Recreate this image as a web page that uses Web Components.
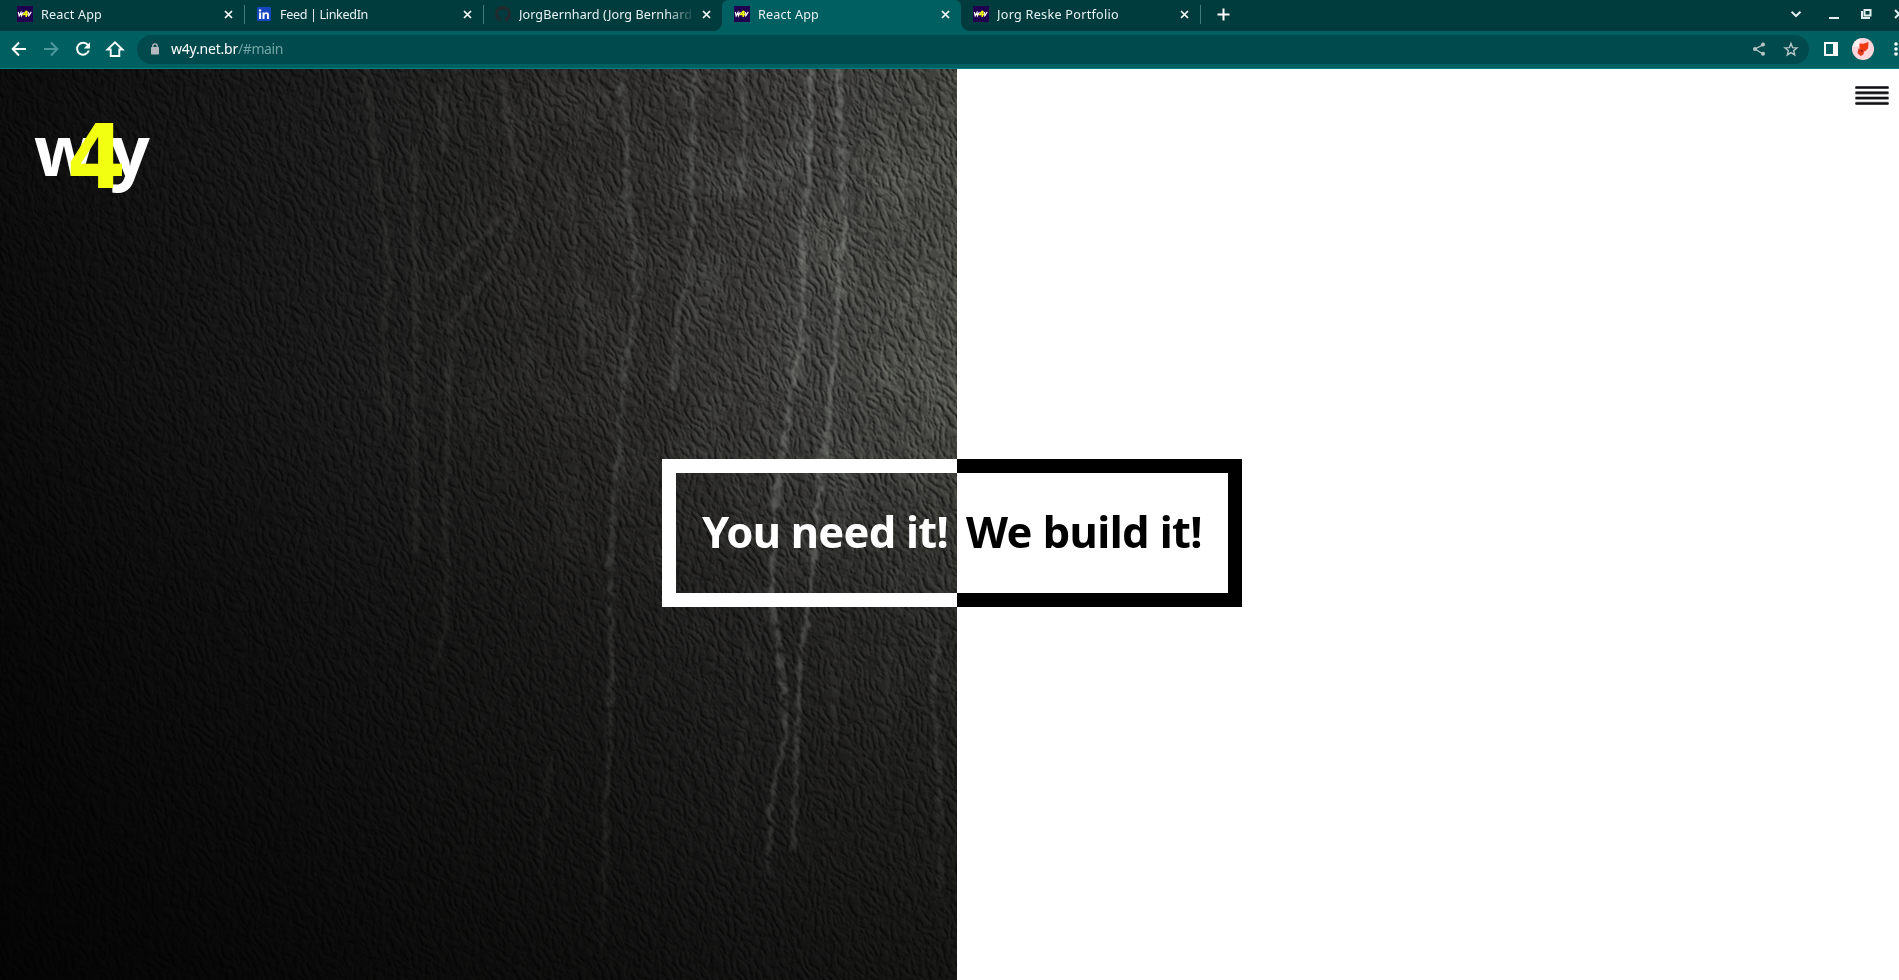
<!DOCTYPE html>
<html lang="en"><head><meta charset="utf-8"><title>w4y</title>
<style>html,body{margin:0;height:100%;overflow:hidden}body{font-family:"Noto Sans","Open Sans",sans-serif}</style></head>
<body><browser-window></browser-window>
<script>
const def=(name,html,init)=>customElements.define(name,class extends HTMLElement{
  connectedCallback(){ if(this.shadowRoot)return; const r=this.attachShadow({mode:'open'});
    r.innerHTML=typeof html==='function'?html(this):html; if(init)init(this,r);}
});

/* Text whose tracking is adjusted so that it spans a given width. */
def('fit-text','<style>:host{display:inline-block;white-space:nowrap}span{display:inline-block}</style><span><slot></slot></span>',(el,r)=>{
  const s=r.querySelector('span'),w=+el.getAttribute('w'),n=el.textContent.length;
  s.style.letterSpacing=((w-s.getBoundingClientRect().width)/n)+'px';
});

const icons={
 w4y:'<svg width="16" height="16"><rect width="16" height="16" fill="#1f0050"/><path d="M1.300 6l.9 3.800L4 6.500l.4 3.300L6.300 6" fill="none" stroke="#fff" stroke-width="1.200"/><path d="M11.300 6l.7 3M14.300 5.800L12 9.500l-1 .8" fill="none" stroke="#fff" stroke-width="1.200"/><path d="M9.600 4.800L6.600 8.500h4.600M10 4.800L9.200 11" fill="none" stroke="#f3ff10" stroke-width="1.500"/></svg>',
 linkedin:'<svg width="16" height="16"><rect x="1" y="1" width="14" height="14" rx=".6" fill="#1447c0"/><circle cx="4.1" cy="4.4" r="1.2" fill="#fff"/><path d="M3.1 6.4h2V13h-2zM6.5 6.4h1.9v.9c.4-.7 1.100-1 2-1 1.900 0 2.500 1.200 2.500 3V13H11V9.700c0-1-.2-1.700-1.100-1.700-1 0-1.400.7-1.400 1.700V13h-2z" fill="#fff"/></svg>',
 github:'<svg width="16" height="16" viewBox="0 0 16 16"><path fill="#24292f" d="M8 0C3.580 0 0 3.580 0 8c0 3.540 2.290 6.530 5.470 7.590.4.07.55-.17.55-.38 0-.19-.01-.82-.01-1.490-2.010.37-2.530-.49-2.690-.94-.09-.23-.48-.94-.82-1.130-.28-.15-.68-.52-.01-.53.63-.01 1.080.58 1.230.82.72 1.210 1.870.87 2.330.66.07-.52.28-.87.51-1.070-1.780-.2-3.640-.89-3.640-3.950 0-.87.31-1.590.82-2.150-.08-.2-.36-1.020.08-2.120 0 0 .67-.21 2.200.82a7.600 7.600 0 0 1 4 0c1.530-1.040 2.200-.82 2.200-.82.44 1.100.16 1.920.08 2.120.51.56.82 1.270.82 2.150 0 3.070-1.870 3.750-3.650 3.950.29.25.54.73.54 1.480 0 1.070-.01 1.930-.01 2.200 0 .21.15.46.55.38A8.010 8.010 0 0 0 16 8c0-4.420-3.580-8-8-8z"/></svg>'
};

def('browser-tab',el=>`<style>
:host{display:flex;box-sizing:border-box;flex:none;width:239px;height:31px;align-items:center;padding:0 11px 3px 12px;position:relative;color:#e9f3f3;font-size:12.6px}
:host([sep])::after{content:"";position:absolute;right:-1px;top:5px;width:1px;height:19px;background:#3d7d7e}
:host([active]){background:#005f61;border-radius:6px 6px 0 0}
:host([active])::before,:host([active])::after{content:"";position:absolute;bottom:0;width:8px;height:8px}
:host([active])::before{left:-8px;background:radial-gradient(circle at 0 0,#0000 7.500px,#005f61 8px)}
:host([active])::after{right:-8px;background:radial-gradient(circle at 100% 0,#0000 7.500px,#005f61 8px)}
i{display:flex;width:16px;height:16px;margin-right:8px}
.t{flex:1;min-width:0;overflow:hidden;line-height:18px;height:20px;padding-top:2px;box-sizing:border-box}
:host([long]) .t{-webkit-mask:linear-gradient(90deg,#000 148px,#0000 176px)}
svg{display:block}.x{flex:none;margin-left:5px}
</style><i>${icons[el.getAttribute('icon')]}</i><span class="t"><slot></slot></span>
<svg class="x" width="9" height="9"><path d="M1 1l7 7M8 1l-7 7" stroke="#fff" stroke-width="1.700"/></svg>`);

def('tab-strip',`<style>
:host{display:flex;height:31px;background:#003b3d;padding-left:5px;box-sizing:border-box}
.plus{margin:8px 0 0 16.500px}.win{display:flex;margin-left:auto;width:108px;height:28px;flex:none}
</style>
<browser-tab icon="w4y" sep><fit-text w="61">React App</fit-text></browser-tab>
<browser-tab icon="linkedin" sep><fit-text w="88">Feed | LinkedIn</fit-text></browser-tab>
<browser-tab icon="github" long><fit-text w="173">JorgBernhard (Jorg Bernhard</fit-text></browser-tab>
<browser-tab icon="w4y" active><fit-text w="61">React App</fit-text></browser-tab>
<browser-tab icon="w4y" sep><fit-text w="122">Jorg Reske Portfolio</fit-text></browser-tab>
<svg class="plus" width="13" height="13"><path d="M6.500 .5v12M.5 6.500h12" stroke="#fff" stroke-width="2"/></svg>
<svg class="win" viewBox="0 0 108 28" fill="none" stroke="#e4eeee"><path d="M.5 11.700l4.500 4.300 4.500-4.300" stroke-width="2"/><path d="M38 18h10" stroke-width="2"/><path d="M73.500 10h6v5.500h-6z" stroke-width="2"/><path d="M71 11v7h8" stroke-width="2"/><path d="M104 10l8 8M112 10l-8 8" stroke-width="2"/></svg>`);

def('nav-bar',`<style>
:host{display:flex;height:38px;background:#005f61;border-bottom:1px solid #008082;box-sizing:border-box;padding-top:4px}
svg{display:block;flex:none}
.box{display:flex;width:1672px;height:29px;border-radius:15px;background:#00494d;flex:none;align-items:center;box-sizing:border-box;padding:0 8px 0 14px;font-size:14px;color:#fff}
.url{display:flex;margin-left:12px;line-height:20px;padding-bottom:1px}.path{color:#74a5a7}.end{margin-left:auto}
</style>
<svg width="137" height="29" fill="none" stroke="#fff" stroke-width="2"><path d="M26 14H13M19 7.500L12.700 14l6.300 6.500"/><path d="M44 14h13M51 7.500l6.300 6.500-6.300 6.500" stroke="#4d999b"/><path d="M88 10.200A6 6 0 1 0 88.800 15.500"/><path d="M90 7.200v6.300h-6.300z" fill="#fff" stroke="none"/><path d="M107.500 14.500h3.200v6.500h8.600v-6.500h3.200L115 7.300z" stroke-width="1.900"/></svg>
<div class="box"><svg width="8" height="12" style="margin-top:-2px"><path d="M1.800 5V3a2.200 2.200 0 0 1 4.400 0v2" fill="none" stroke="#b4b9c0" stroke-width="1.300"/><rect y="4" width="8" height="7.500" rx=".8" fill="#b4b9c0"/></svg>
<span class="url"><fit-text w="67">w4y.net.br</fit-text><fit-text class="path" w="45">/#main</fit-text></span>
<svg class="end" width="48" height="29" fill="none" stroke="#b8c6c7"><path d="M10 9.800L2 14l8 5" stroke-width="1.300"/><g fill="#b8c6c7" stroke="none"><circle cx="10" cy="9.500" r="2"/><circle cx="2" cy="14" r="2"/><circle cx="10" cy="18.700" r="2"/></g><path d="M38 8.500l1.600 4.100 4.400.3-3.400 2.800 1.100 4.200-3.700-2.300-3.700 2.300 1.100-4.200-3.400-2.800 4.400-.3z" stroke-width="1.400"/></svg></div>
<svg width="90" height="30"><path d="M15 7h14v14H15z" fill="#fff"/><path d="M17 9h7v10h-7z" fill="#005f61"/><circle cx="54" cy="14" r="11" fill="#ffd6dc"/><path d="M43.500 12a11 11 0 0 1 8-8.700l-1 8z" fill="#fff1f1"/><path d="M50.500 8.500l4 .2 5-1.700-.5 6.500-3 3-5.500-2.500z" fill="#f23a12"/><path d="M49.500 13.500l5.500 2-.5 4-3 1.500-3-3z" fill="#e03a1a"/><path d="M51.500 15l2.300 1.500" stroke="#82140a" stroke-width="1.200"/><g fill="#fff"><circle cx="87" cy="9" r="1.800"/><circle cx="87" cy="14" r="1.800"/><circle cx="87" cy="19" r="1.800"/></g></svg>`);

def('leather-panel',`<style>:host{display:block;position:relative;overflow:hidden;background:#141414}svg{position:absolute;inset:0}</style>
<svg width="957" height="911" viewBox="0 0 957 911"><defs>
<filter id="grain" x="0" y="0" width="100%" height="100%" color-interpolation-filters="sRGB">
<feTurbulence type="turbulence" baseFrequency=".14 .08" numOctaves="3" seed="8" result="n"/>
<feColorMatrix in="n" values="0 0 0 0 0 0 0 0 0 0 0 0 0 0 0 2.200 0 0 0 0" result="h"/>
<feGaussianBlur in="h" stdDeviation=".6" result="hb"/>
<feTurbulence type="fractalNoise" baseFrequency=".03" numOctaves="2" seed="15"/>
<feDisplacementMap in="hb" scale="10" xChannelSelector="R" yChannelSelector="G"/>
<feDiffuseLighting surfaceScale="1.100" diffuseConstant=".78" lighting-color="#fff"><feDistantLight azimuth="350" elevation="40"/></feDiffuseLighting></filter>
<filter id="rough" x="-20" y="-20" width="1000" height="960" filterUnits="userSpaceOnUse" color-interpolation-filters="sRGB"><feTurbulence type="fractalNoise" baseFrequency=".08" numOctaves="3" seed="4" result="n"/><feDisplacementMap in="SourceGraphic" in2="n" scale="11" xChannelSelector="R" yChannelSelector="G"/><feGaussianBlur stdDeviation=".9" result="d"/><feColorMatrix in="n" values="0 0 0 0 1 0 0 0 0 1 0 0 0 0 1 0 0 3 0 -.5" result="m"/><feComposite in="d" in2="m" operator="in"/></filter>
<filter id="cloud" x="0" y="0" width="100%" height="100%" color-interpolation-filters="sRGB"><feTurbulence type="fractalNoise" baseFrequency=".022 .014" numOctaves="5" seed="21"/><feColorMatrix values="0 0 0 0 .66 0 0 0 0 .69 0 0 0 0 .63 3 0 0 0 -1.350" result="c"/><feComposite in="c" in2="SourceAlpha" operator="in"/></filter>
<linearGradient id="base" x2="1" y2="0"><stop stop-color="#0c0c0c"/><stop offset=".3" stop-color="#191919"/><stop offset=".6" stop-color="#2a2928"/><stop offset=".8" stop-color="#383736"/><stop offset="1" stop-color="#3e3e3a"/></linearGradient>
<linearGradient id="down" x2="0" y2="1"><stop stop-color="#000" stop-opacity="0"/><stop offset=".35" stop-color="#000" stop-opacity=".08"/><stop offset=".6" stop-color="#000" stop-opacity=".38"/><stop offset="1" stop-color="#000" stop-opacity=".68"/></linearGradient>
<radialGradient id="glow" gradientUnits="userSpaceOnUse" cx="940" cy="260" r="330" gradientTransform="translate(940 260) scale(.8 1) translate(-940 -260)"><stop stop-color="#70736a" stop-opacity=".3"/><stop offset="1" stop-color="#70736a" stop-opacity="0"/></radialGradient>
<linearGradient id="fade" x2="0" y2="1"><stop stop-color="#fff"/><stop offset=".5" stop-color="#ccc"/><stop offset=".75" stop-color="#999"/><stop offset="1" stop-color="#111"/></linearGradient>
<mask id="mf"><rect width="957" height="911" fill="url(#fade)"/></mask>
<radialGradient id="cm" gradientUnits="userSpaceOnUse" cx="900" cy="180" r="560"><stop stop-color="#fff"/><stop offset="1" stop-color="#000"/></radialGradient>
<mask id="mc"><rect width="957" height="911" fill="url(#cm)"/></mask>
</defs>
<rect width="957" height="911" fill="url(#base)"/>
<rect width="957" height="911" fill="url(#down)"/>
<rect width="957" height="911" fill="url(#glow)"/>
<g mask="url(#mc)" opacity=".14"><rect width="957" height="911" filter="url(#cloud)"/></g>
<g style="mix-blend-mode:overlay" opacity=".7"><g transform="rotate(-24 478 455)"><rect x="-220" y="-240" width="1400" height="1400" filter="url(#grain)"/></g></g>
<g mask="url(#mf)"><g filter="url(#rough)" fill="none" stroke="#9a9e97" stroke-linecap="round" stroke-linejoin="round">
<g stroke-width="5" opacity=".42"><path d="M810 0l1 60-4 60-6 50 3 60-2 40-10 50-8 60-10 60-2 90 10 70 4 60-14 70-4 80"/><path d="M838 0l4 90 3 60-5 50-4 60-5 70-10 80-12 120-8 50-4 90-5 110"/></g>
<g stroke-width="5" opacity=".24"><path d="M618 0l10 60-2 70 8 50 2 60-12 60-6 80-8 120 2 100-6 140-4 150"/><path d="M695 0l-2 60-1 90-4 60-12 50-2 60"/><path d="M742 0l2 70-4 60" /><path d="M940 560l-8 60 8 90v110"/></g>
<g stroke-width="6" opacity=".1"><path d="M365 0l14 120 12 80-8 60 7 100"/><path d="M440 20l4 60M502 10l20 120-20 60-50 60-6 150-1 160-12 40M415 80v400M510 140l-70 70M570 100l14 200M550 690l-10 120M752 570l-20 200M600 20l30 60M832 570l4 100"/></g></g></g>
</svg><slot></slot>`);

def('site-logo',`<style>:host{display:block;position:absolute;left:0;top:0;font-weight:700;line-height:1;color:#fff}
span{position:absolute}.w{left:34px;top:45px;font:700 70px/70px "Open Sans",sans-serif}.n{left:67px;top:44px;color:#f3ff10;font:700 89px/89px "DejaVu Sans",sans-serif;transform:scaleX(.95);transform-origin:0 0}.y{left:110px;top:45px;font:700 70px/70px "Open Sans",sans-serif}</style>
<span class="w">w</span><span class="y">y</span><span class="n">4</span>`);

def('hero-half',`<style>
:host{display:flex;align-items:center;box-sizing:border-box;height:148px;border:14px solid currentColor;font-weight:700;font-size:43.500px;line-height:60px;padding-bottom:4px;position:relative}
:host([side=left]){color:#fff;width:295px;border-right:0;padding-left:26px}
:host([side=right]){color:#000;width:285px;border-left:0;padding-left:9px}
</style><slot></slot>`);

def('menu-button','<style>:host{display:block}svg{display:block}</style><svg width="34" height="22"><path d="M1.500 3.500h31M1.500 8.800h31M1.500 14.100h31M1.500 19.400h31" stroke="#77777b" stroke-width="3.200" stroke-linecap="round"/><path d="M1.500 3.500h31M1.500 8.800h31M1.500 14.100h31M1.500 19.400h31" stroke="#111114" stroke-width="2" stroke-linecap="round"/></svg>');

def('browser-window',`<style>
:host{display:flex;flex-direction:column;width:1899px;height:980px;overflow:hidden}
main{display:grid;grid-template-columns:957px 1fr;height:911px;position:relative}
.l{display:flex;justify-content:flex-end;height:911px;box-sizing:border-box}
.l hero-half{margin:390px 0 0 auto;width:295px}
.r{background:#fff;position:relative;box-sizing:border-box;padding-top:390px}
menu-button{position:absolute;right:10px;top:15px}
</style><tab-strip></tab-strip><nav-bar></nav-bar>
<main><leather-panel class="l"><site-logo></site-logo><hero-half side="left"><fit-text w="246">You need it!</fit-text></hero-half></leather-panel>
<div class="r"><menu-button></menu-button><hero-half side="right"><fit-text w="236">We build it!</fit-text></hero-half></div></main>`);
</script></body></html>
